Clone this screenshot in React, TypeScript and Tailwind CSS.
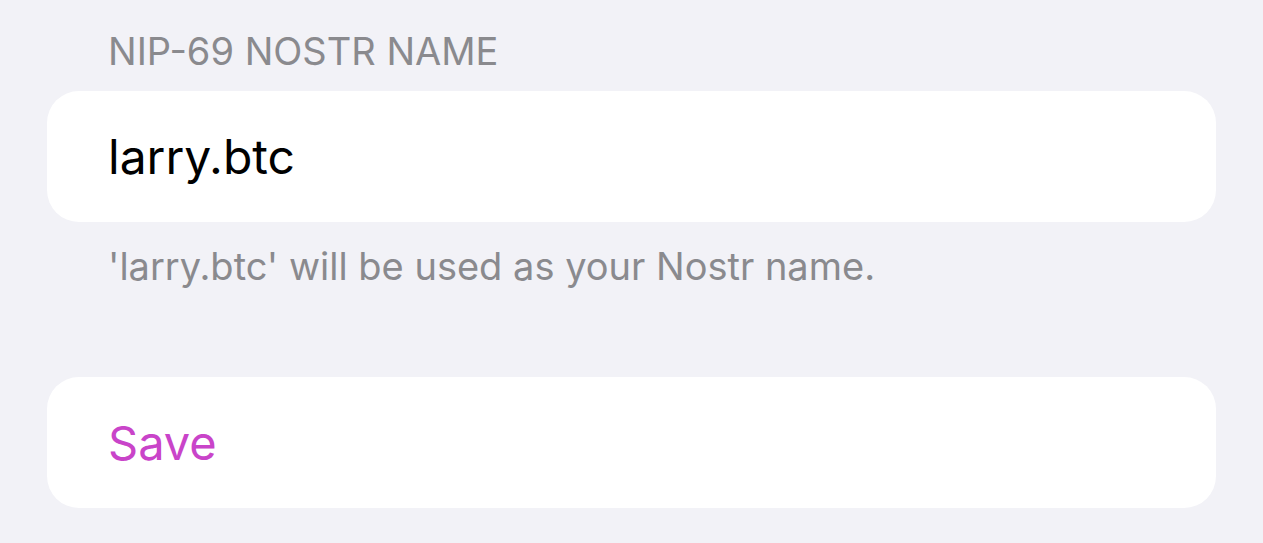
import React from 'react';

export default function App() {
  return (
    <div
      className="w-[1263px] h-[543px] overflow-hidden bg-[#f2f2f7] px-[47px]"
      style={{ fontFamily: 'Inter, "Noto Sans", sans-serif' }}
    >
      <div className="pt-[30px] pl-[61px] text-[38px] leading-[42px] text-[#8a8a8e]">
        NIP-69 NOSTR NAME
      </div>
      <div className="mt-[19px] h-[131px] rounded-[32px] bg-white flex items-center pl-[61px]">
        <span className="text-[48px] leading-[56px] text-black">larry.btc</span>
      </div>
      <div className="mt-[24px] pl-[61px] text-[38px] leading-[40px] text-[#8a8a8e]">
        'larry.btc' will be used as your Nostr name.
      </div>
      <div className="mt-[91px] h-[131px] rounded-[32px] bg-white flex items-center pl-[61px]">
        <span className="text-[47px] leading-[56px] text-[#c944c9]">Save</span>
      </div>
    </div>
  );
}
